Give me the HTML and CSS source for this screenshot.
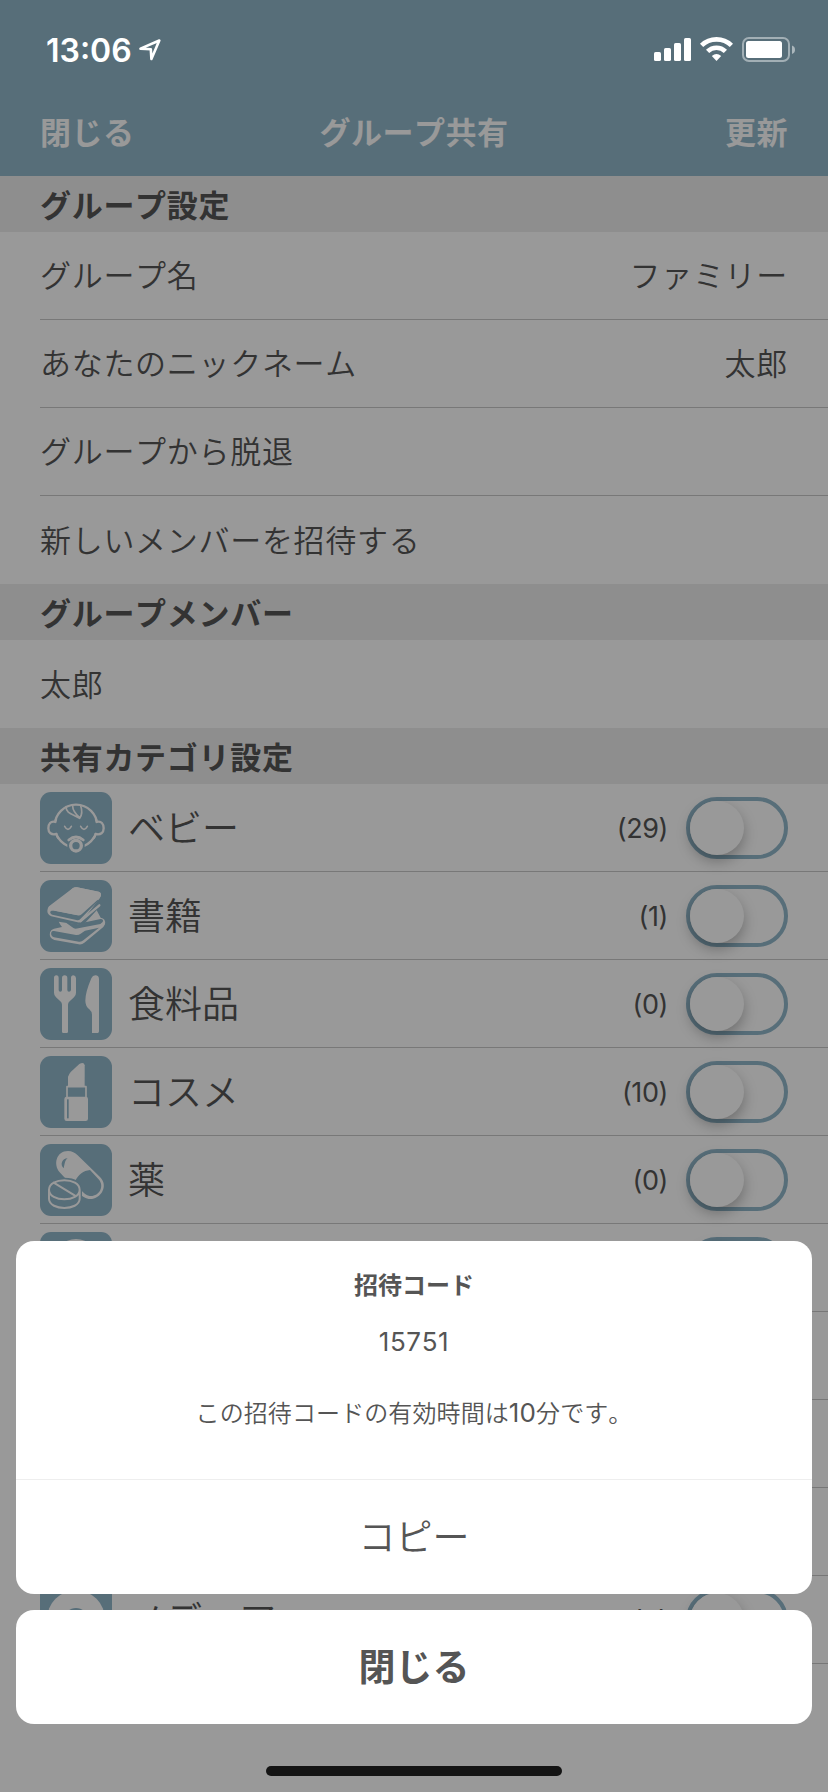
FILE: index.html
```html
<!DOCTYPE html>
<html lang="ja">
<head>
<meta charset="utf-8">
<title>グループ共有</title>
<link rel="stylesheet" href="styles.css">
</head>
<body>
<div class="screen">
  <header class="navbar">
    <span class="nav-button">閉じる</span>
    <h1 class="nav-title">グループ共有</h1>
    <span class="nav-button nav-right">更新</span>
  </header>

  <main class="settings">
    <h2 class="section">グループ設定</h2>
    <div class="row"><span>グループ名</span><span>ファミリー</span></div>
    <div class="row"><span>あなたのニックネーム</span><span>太郎</span></div>
    <div class="row"><span>グループから脱退</span></div>
    <div class="row last"><span>新しいメンバーを招待する</span></div>

    <h2 class="section">グループメンバー</h2>
    <div class="row last"><span>太郎</span></div>

    <h2 class="section">共有カテゴリ設定</h2>
    <div class="row category">
      <svg class="tile" viewBox="0 0 216 216">
        <circle cx="108" cy="102" r="64" class="line w7"/>
        <path class="bg" d="M32 86h20v46H32zM164 86h20v46h-20z"/>
        <path class="line w7" d="M46 90C32 86 25 96 25 109s9 21 24 17M170 90c14-4 21 6 21 19s-9 21-24 17"/>
        <path class="line w7" d="M46 89l2-6M170 89l-2-6M49 126q2 7 6 12M167 126q-2 7-6 12"/>
        <path class="line w5" d="M78 44c0 22 22 22 41 35 7-10 8-24 3-38M98 42c0 14 9 24 20 34"/>
        <path class="line w5" d="M74 103q10 18 20 0M122 103q10 18 20 0"/>
        <path class="bg" d="M82 150q26-28 52 0v34H82z"/>
        <path class="line w8" d="M86 144q22-18 44 0"/>
        <circle cx="108" cy="161" r="16" class="line w10"/>
      </svg>
      <span class="name">ベビー</span><span class="count">(29)</span><i class="toggle"></i>
    </div>
    <div class="row category">
      <svg class="tile" viewBox="0 0 216 216">
        <path class="fg" d="M98 25q6-5 13-3l65 13q10 4 6 14l-3 6-52 67q-5 7-14 5l-79-18q-16-6-11-22 1-5 4-8z"/>
        <path class="bg" d="M38 91l72 14q6 1 10-4l50-44 5 5-54 55q-5 5-12 3l-72-16c-9-4-8-13 1-12z"/>
        <path class="fg" d="M98 25q6-5 13-3l65 13q10 4 6 14l-3 5-54 49q-6 5-13 3l-84-17z"/>
        <path class="line w7" d="M178 76l-57 48"/>
        <path class="fg" d="M56 125l66 10q8-1 13-6l35-38 12 22q16 2 13 20l-5 8-57 47q-8 7-17 5l-73-13q-17-5-13-23 3-9 12-11l24-5q-4-5-10-16z"/>
        <path class="bg" d="M76 127l34 5q9 2 15-3l57-12q10 1 6 9l-7 6-74 14q-6 0-10-4z"/>
        <path class="bg" d="M42 153l66 12q8 1 14-4l13-9 42-9-47 38q-5 5-13 4l-75-13q-11-4-8-15 2-5 8-4z"/>
      </svg>
      <span class="name">書籍</span><span class="count">(1)</span><i class="toggle"></i>
    </div>
    <div class="row category">
      <svg class="tile" viewBox="0 0 216 216">
        <path class="fg" d="M42 30q0-8 7-8t7 8v36q0 5 5 5t5-5V30q0-8 8-8t8 8v36q0 5 5 5t6-5V30q0-8 7-8t8 8v44q0 9-6 14l-13 12q-5 4-5 10v81q0 4-4 4H70q-4 0-4-4v-81q0-6-5-10L48 88q-6-5-6-14z"/>
        <path class="fg" d="M177 34q0-12-11-12-8 0-12 9-18 42-18 67 0 16 12 26 8 7 8 16v55h17q4 0 4-5z"/>
      </svg>
      <span class="name">食料品</span><span class="count">(0)</span><i class="toggle"></i>
    </div>
    <div class="row category">
      <svg class="tile" viewBox="0 0 216 216">
        <path class="fg" d="M84 92V62q2-6 8-14l26-24q14-7 16 4v64z"/>
        <path class="line w5" d="M81 124V92h57v32"/>
        <rect class="fg" x="73" y="122" width="71" height="73" rx="7"/>
        <rect class="bg" x="81" y="130" width="5" height="57"/>
      </svg>
      <span class="name">コスメ</span><span class="count">(10)</span><i class="toggle"></i>
    </div>
    <div class="row category">
      <svg class="tile" viewBox="0 0 216 216">
        <path class="fg" d="M59 85C39 61 49 21 84 21c12 0 21 5 29 13l67 65c28 27 1 70-34 66-13-2-23-11-32-21z"/>
        <path class="bg" d="M106 110c10-19 24-30 44-32l25 27c21 22 1 54-26 51-10-1-17-8-28-20z"/>
        <path class="bg" d="M71 73c-12-10-5-30 12-30-8 5-8 13-12 30z"/>
        <path class="bg" d="M20 136q2-35 53-35t53 35v26q-8 36-53 36t-53-36z"/>
        <path class="line w6" d="M27 137c0-38 92-38 92 0s-92 38-92 0v28c2 36 90 36 92 0v-28M41 116l64 39"/>
      </svg>
      <span class="name">薬</span><span class="count">(0)</span><i class="toggle"></i>
    </div>
    <div class="row category">
      <svg class="tile" viewBox="0 0 216 216"><circle cx="108" cy="89" r="68" class="fg"/></svg>
      <span class="name"></span><i class="toggle"></i>
    </div>
    <div class="row category"></div>
    <div class="row category"></div>
    <div class="row category"></div>
    <div class="row category">
      <svg class="tile" viewBox="0 0 216 216"><circle cx="108" cy="106" r="87" class="fg"/><circle cx="108" cy="106" r="34" class="bg"/></svg>
      <span class="name">メディア</span><span class="count">(0)</span><i class="toggle"></i>
    </div>
  </main>
</div>

<div class="overlay">
  <div class="statusbar">
    <span class="clock">13:06</span>
    <svg class="location" width="22" height="22" viewBox="0 0 22 22"><path d="M1.500 9.600L20.300 1.500 12.400 20 11.800 10.200z"/></svg>
    <svg class="indicators" width="144" height="28" viewBox="0 0 144 28">
      <g fill="#fff">
        <rect x="0" y="16" width="7" height="9" rx="1.600"/><rect x="10" y="12" width="7" height="13" rx="1.600"/>
        <rect x="20" y="7" width="7" height="18" rx="1.600"/><rect x="30" y="2" width="7" height="23" rx="1.600"/>
        <rect x="92" y="5" width="36" height="17" rx="2.500"/>
      </g>
      <g fill="none" stroke="#fff" stroke-width="4.600"><path d="M47.600 9.400a21.400 21.400 0 0 1 29.800 0"/><path d="M53.600 15.400a12.800 12.800 0 0 1 17.800 0"/></g>
      <path fill="#fff" d="M57.800 20q4.700-4 9.400 0l-4.700 5z"/>
      <rect x="89" y="2" width="46" height="23" rx="6" fill="none" stroke="#fff" stroke-opacity=".45" stroke-width="2"/>
      <path fill="#fff" fill-opacity=".5" d="M138 9.500q3 1 3 4.200t-3 4.200z"/>
    </svg>
  </div>

  <div class="sheets">
    <section class="sheet">
      <div class="message">
        <h3 class="sheet-title">招待コード</h3>
        <p class="code">15751</p>
        <p class="note">この招待コードの有効時間は<span class="minutes">10</span>分です。</p>
      </div>
      <div class="action">コピー</div>
    </section>
    <div class="sheet action close">閉じる</div>
    <div class="home"></div>
  </div>
</div>
</body>
</html>
```
FILE: styles.css
```css
* { box-sizing: border-box; margin: 0; }
body {
  position: relative;
  width: 828px;
  height: 1792px;
  overflow: hidden;
  color: #555;
  background: #fff;
  font-family: Inter, "Noto Sans CJK JP", sans-serif;
  font-weight: 400;
  font-kerning: none;
}
.screen { height: 1792px; }

.navbar {
  display: grid;
  grid-template-columns: 1fr auto 1fr;
  align-items: center;
  height: 176px;
  padding: 84px 40px 0;
  color: #fff;
  background: #91b7ca;
  font-size: 31px;
  letter-spacing: .5px;
}
.nav-title { font-size: inherit; font-weight: 600; }
.nav-button { font-weight: 600; }
.nav-right { text-align: right; }

.section {
  height: 56px;
  padding-left: 40px;
  background: #ededed;
  font-size: 31px;
  font-weight: 600;
  letter-spacing: .7px;
  line-height: 59px;
}
.row {
  display: flex;
  align-items: center;
  justify-content: space-between;
  height: 88px;
  margin-left: 40px;
  padding-right: 40px;
  border-bottom: 1px solid #c8c8c8;
  font-size: 31px;
  font-weight: 350;
  letter-spacing: .7px;
}
.row > span:not(.count) { padding-bottom: 4px; }
.row.last { border-bottom: 0; }

.category { justify-content: flex-start; }
.tile { width: 72px; height: 72px; border-radius: 11px; background: #91b7ca; }
.name { flex: 1; padding-left: 16px; font-size: 37px; letter-spacing: 0; }
.count { margin-right: 18px; padding-top: 2px; font-size: 27px; font-weight: 400; letter-spacing: -.4px; }
.toggle {
  width: 102px;
  height: 62px;
  border: 4px solid #91b7ca;
  border-radius: 31px;
}
.toggle::before {
  content: "";
  display: block;
  width: 54px;
  height: 54px;
  border-radius: 50%;
  background: #fff;
  box-shadow: 0 6px 14px rgba(0, 0, 0, .28);
}
.fg { fill: #fff; }
.bg { fill: #91b7ca; }
.line { fill: none; stroke: #fff; stroke-linecap: round; stroke-linejoin: round; }
.w5 { stroke-width: 5; }
.w6 { stroke-width: 6; }
.w7 { stroke-width: 7; }
.w8 { stroke-width: 8; }
.w10 { stroke-width: 10; }

.overlay {
  position: absolute;
  inset: 0;
  display: flex;
  flex-direction: column;
  justify-content: space-between;
  background: rgba(0, 0, 0, .4);
}
.statusbar {
  display: flex;
  align-items: center;
  height: 88px;
  padding: 12px 30px 0 46px;
  color: #fff;
}
.clock { font-size: 32px; font-weight: 600; }
.location { margin-left: 7px; fill: none; stroke: #fff; stroke-width: 2.600; stroke-linejoin: round; }
.indicators { margin-left: auto; }

.sheets { padding: 0 16px 16px; text-align: center; }
.sheet { border-radius: 18px; background: #fff; }
.message {
  height: 239px;
  padding-top: 27px;
  border-bottom: 1px solid #eee;
}
.sheet-title { font-size: 24px; font-weight: 600; line-height: 36px; }
.code { margin-top: 19px; font-size: 26px; letter-spacing: .6px; line-height: 38px; }
.note { margin-top: 35px; font-size: 24px; font-weight: 350; letter-spacing: .1px; line-height: 36px; }
.minutes { font-size: 26px; font-weight: 400; line-height: 1; }
.action { height: 114px; font-size: 37px; font-weight: 350; line-height: 115px; }
.close { margin-top: 16px; font-weight: 600; }
.home { width: 296px; height: 10px; margin: 42px auto 0; border-radius: 5px; background: #141414; }
```
